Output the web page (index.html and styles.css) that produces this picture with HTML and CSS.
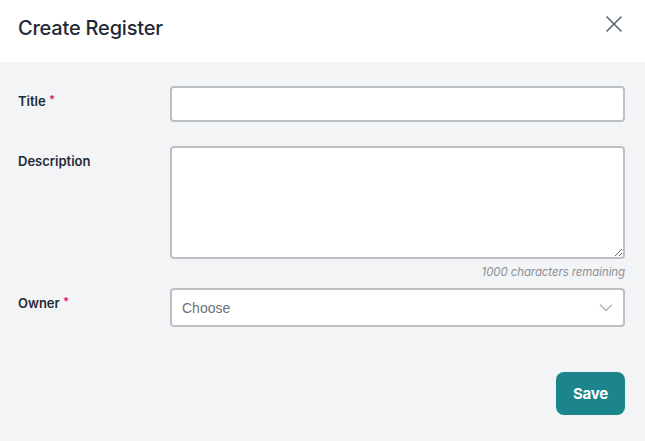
FILE: index.html
```html
<!DOCTYPE html>
<html lang="en">
<head>
<meta charset="utf-8">
<title>Create Register</title>
<link rel="stylesheet" href="styles.css">
</head>
<body>
<div class="modal">
  <header class="modal-header">
    <h2 class="modal-title">Create Register</h2>
    <button class="close-btn" type="button" aria-label="Close">
      <svg width="16" height="16" viewBox="0 0 16 16" fill="none" stroke="#4b6272" stroke-width="1.5" stroke-linecap="round">
        <path d="M1 1 L15 15 M15 1 L1 15"/>
      </svg>
    </button>
  </header>
  <form class="modal-body">
    <div class="row">
      <label class="label" for="title">Title <span class="req">*</span></label>
      <div class="field">
        <input id="title" class="input" type="text">
      </div>
    </div>
    <div class="row row-desc">
      <label class="label" for="desc">Description</label>
      <div class="field">
        <textarea id="desc" class="textarea"></textarea>
        <div class="counter">1000 characters remaining</div>
      </div>
    </div>
    <div class="row">
      <label class="label" for="owner">Owner <span class="req">*</span></label>
      <div class="field select-wrap">
        <select id="owner" class="select">
          <option>Choose</option>
        </select>
        <svg class="chevron" width="14" height="8" viewBox="0 0 14 8" fill="none" stroke="#b3b8be" stroke-width="1.5" stroke-linecap="round" stroke-linejoin="round">
          <path d="M1.5 1 L7 6.5 L12.5 1"/>
        </svg>
      </div>
    </div>
    <div class="actions">
      <button class="save-btn" type="button">Save</button>
    </div>
  </form>
</div>
</body>
</html>
```

FILE: styles.css
```css
* { box-sizing: border-box; }
html, body { margin: 0; padding: 0; }
body {
  background: #f3f4f6;
  font-family: "Inter", "Lato", sans-serif;
  color: #1f2a37;
  width: 645px;
  height: 441px;
  overflow: hidden;
}
.modal { display: flex; flex-direction: column; }
.modal-header {
  height: 62px;
  background: #ffffff;
  display: flex;
  justify-content: space-between;
  align-items: flex-start;
  padding: 0 23px 0 18px;
}
.modal-title {
  margin: 0;
  padding-top: 15px;
  font-size: 20px;
  font-weight: 500;
  letter-spacing: -0.2px;
  line-height: 26px;
  color: #1f2a37;
}
.close-btn {
  margin-top: 16px;
  padding: 0;
  border: 0;
  background: transparent;
  width: 16px;
  height: 16px;
  display: flex;
}
.modal-body {
  padding: 24px 20px 0 18px;
  display: flex;
  flex-direction: column;
}
.row {
  display: grid;
  grid-template-columns: 152px 1fr;
  margin-bottom: 24px;
}
.row-desc { margin-bottom: 8px; }
.label {
  font-size: 13px;
  font-weight: 600;
  line-height: 20px;
  padding-top: 5px;
  color: #1f2a37;
}
.req {
  color: #e0245e;
  font-size: 11px;
  font-weight: 700;
  vertical-align: top;
  position: relative;
  top: -2px;
}
.field { display: flex; flex-direction: column; }
.input, .textarea, .select {
  width: 100%;
  border: 2px solid #bcc0c5;
  border-radius: 4px;
  background: #ffffff;
  outline: none;
  font-family: "Liberation Sans", Arial, sans-serif;
  font-size: 14px;
}
.input { height: 36px; padding: 0 10px; }
.textarea { height: 113px; padding: 8px 10px; resize: vertical; display: block; }
.counter {
  text-align: right;
  font-size: 11.5px;
  font-style: italic;
  color: #8b9097;
  line-height: 16px;
  margin-top: 5px;
  letter-spacing: -0.1px;
}
.select-wrap { position: relative; }
.select {
  height: 39px;
  padding: 0 10px;
  appearance: none;
  -webkit-appearance: none;
  color: #6b7078;
}
.chevron {
  position: absolute;
  right: 12px;
  top: 16px;
  pointer-events: none;
}
.actions {
  display: flex;
  justify-content: flex-end;
  margin-top: 21px;
}
.save-btn {
  width: 69px;
  height: 43px;
  border: 0;
  border-radius: 8px;
  background: #1b858b;
  color: #ffffff;
  font-family: "Inter", "Lato", sans-serif;
  font-size: 15px;
  font-weight: 700;
  letter-spacing: -0.2px;
}
```
